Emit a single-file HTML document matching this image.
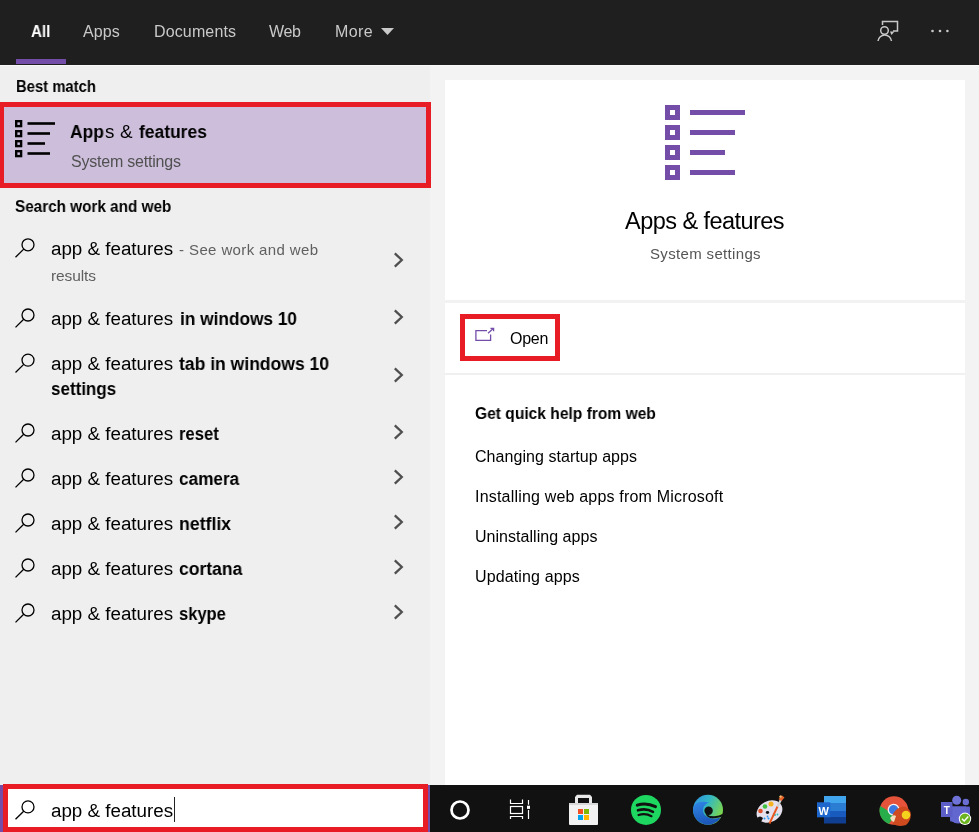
<!DOCTYPE html>
<html><head><meta charset="utf-8"><style>
html,body{margin:0;padding:0;width:979px;height:832px;overflow:hidden;background:#f0f0f0}
.t{position:absolute;will-change:transform;white-space:pre;line-height:20px;font-family:"Liberation Sans",sans-serif}
.r{position:absolute}
</style></head><body>
<div class="r" style="left:0px;top:0px;width:979px;height:65px;background:#1f1f1f;"></div>
<div class="t" style="left:31.20px;top:22px;font-size:16px;font-weight:700;color:#fff;transform:scaleX(0.9487);transform-origin:0 0;">All</div>
<div class="t" style="left:83.30px;top:22px;font-size:16px;font-weight:400;color:#c9c9c9;letter-spacing:0.117px;">Apps</div>
<div class="t" style="left:153.70px;top:22px;font-size:16px;font-weight:400;color:#c9c9c9;letter-spacing:0.137px;">Documents</div>
<div class="t" style="left:269.20px;top:22px;font-size:16px;font-weight:400;color:#c9c9c9;letter-spacing:-0.300px;">Web</div>
<div class="t" style="left:335.10px;top:22px;font-size:16px;font-weight:400;color:#c9c9c9;letter-spacing:0.417px;">More</div>
<svg class="r" style="left:0;top:0" width="979" height="65"><polygon points="381,28 394,28 387.5,35" fill="#c9c9c9"/><g fill="none" stroke="#c9c9c9" stroke-width="1.5"><polyline points="882.5,25 882.5,21.5 897.5,21.5 897.5,31 893,31"/><circle cx="884.5" cy="30.5" r="3.8"/><path d="M878,41 A6.8,6.8 0 0 1 891.5,41"/></g><polygon points="890,31.5 894.5,31.5 891.5,35" fill="#c9c9c9"/><circle cx="932.5" cy="31" r="1.3" fill="#c9c9c9"/><circle cx="940" cy="31" r="1.3" fill="#c9c9c9"/><circle cx="947.4" cy="31" r="1.3" fill="#c9c9c9"/></svg>
<div class="r" style="left:16px;top:59px;width:50px;height:5px;background:#744da9;"></div>
<div class="r" style="left:0px;top:65px;width:430px;height:720px;background:#efefef;"></div>
<div class="r" style="left:430px;top:65px;width:549px;height:720px;background:#f3f3f3;"></div>
<div class="r" style="left:0px;top:65px;width:979px;height:1px;background:#f8f8f8;"></div>
<div class="r" style="left:445px;top:80px;width:520px;height:705px;background:#ffffff;"></div>
<div class="r" style="left:445px;top:300px;width:520px;height:3px;background:#f2f2f2;"></div>
<div class="r" style="left:445px;top:373px;width:520px;height:2px;background:#f0f0f0;"></div>
<div class="t" style="left:15.60px;top:77px;font-size:16px;font-weight:700;color:#000;transform:scaleX(0.9264);transform-origin:0 0;">Best match</div>
<div class="r" style="left:-1px;top:102px;width:422px;height:76px;border:5px solid #e81c24;background:#cdbfdc"></div>
<svg class="r" style="left:0;top:100px" width="80" height="80"><g fill="none" stroke="#000" stroke-width="2.4"><rect x="16.2" y="21.2" width="4.9" height="4.9"/><rect x="16.2" y="31.2" width="4.9" height="4.9"/><rect x="16.2" y="41.2" width="4.9" height="4.9"/><rect x="16.2" y="51.2" width="4.9" height="4.9"/></g><g fill="#000"><rect x="27.5" y="22.2" width="27.5" height="2.6"/><rect x="27.5" y="32.2" width="22.5" height="2.6"/><rect x="27.5" y="42.2" width="17.5" height="2.6"/><rect x="27.5" y="52.2" width="22.5" height="2.6"/></g></svg>
<div class="t" style="left:70.10px;top:122px;font-size:18.8px;font-weight:700;color:#000;transform:scaleX(0.9302);transform-origin:0 0;">App</div>
<div class="t" style="left:105.30px;top:122px;font-size:18.8px;font-weight:400;color:#000;letter-spacing:0.000px;">s</div>
<div class="t" style="left:120.30px;top:122px;font-size:18.8px;font-weight:400;color:#000;letter-spacing:0.000px;">&amp;</div>
<div class="t" style="left:138.80px;top:122px;font-size:18.8px;font-weight:700;color:#000;transform:scaleX(0.9282);transform-origin:0 0;">features</div>
<div class="t" style="left:70.60px;top:152px;font-size:16px;font-weight:400;color:#505050;letter-spacing:-0.211px;">System settings</div>
<div class="t" style="left:15.30px;top:197px;font-size:16px;font-weight:700;color:#000;transform:scaleX(0.9554);transform-origin:0 0;">Search work and web</div>
<div class="t" style="left:50.70px;top:238.8px;font-size:18.8px;font-weight:400;color:#000;letter-spacing:-0.008px;">app &amp; features</div>
<div class="t" style="left:179.30px;top:240px;font-size:15px;font-weight:400;color:#606060;letter-spacing:0.000px;">-</div>
<div class="t" style="left:189.40px;top:240px;font-size:15px;font-weight:400;color:#606060;letter-spacing:0.380px;">See work and web</div>
<div class="t" style="left:50.90px;top:266px;font-size:15.5px;font-weight:400;color:#606060;letter-spacing:-0.125px;">results</div>
<svg class="r" style="left:0;top:0" width="60" height="840"><g fill="none" stroke="#000" stroke-width="1.3"><circle cx="28" cy="244.80" r="6.0"/><line x1="15.5" y1="257.20" x2="23.70" y2="249.10"/></g></svg>
<svg class="r" style="left:380px;top:250.39999999999998px" width="30" height="20"><polyline points="394.8,3.3 401.8,10 394.8,16.7" transform="translate(-380,0)" fill="none" stroke="#4f4f4f" stroke-width="2.3"/></svg>
<div class="t" style="left:50.70px;top:309px;font-size:18.8px;font-weight:400;color:#000;letter-spacing:-0.008px;">app &amp; features</div>
<div class="t" style="left:179.90px;top:309px;font-size:18.8px;font-weight:700;color:#000;transform:scaleX(0.9188);transform-origin:0 0;">in windows 10</div>
<svg class="r" style="left:0;top:0" width="60" height="840"><g fill="none" stroke="#000" stroke-width="1.3"><circle cx="28" cy="315.00" r="6.0"/><line x1="15.5" y1="327.40" x2="23.70" y2="319.30"/></g></svg>
<svg class="r" style="left:380px;top:307.3px" width="30" height="20"><polyline points="394.8,3.3 401.8,10 394.8,16.7" transform="translate(-380,0)" fill="none" stroke="#4f4f4f" stroke-width="2.3"/></svg>
<div class="t" style="left:50.70px;top:424px;font-size:18.8px;font-weight:400;color:#000;letter-spacing:-0.008px;">app &amp; features</div>
<div class="t" style="left:179.40px;top:424px;font-size:18.8px;font-weight:700;color:#000;transform:scaleX(0.8854);transform-origin:0 0;">reset</div>
<svg class="r" style="left:0;top:0" width="60" height="840"><g fill="none" stroke="#000" stroke-width="1.3"><circle cx="28" cy="430.00" r="6.0"/><line x1="15.5" y1="442.40" x2="23.70" y2="434.30"/></g></svg>
<svg class="r" style="left:380px;top:422.3px" width="30" height="20"><polyline points="394.8,3.3 401.8,10 394.8,16.7" transform="translate(-380,0)" fill="none" stroke="#4f4f4f" stroke-width="2.3"/></svg>
<div class="t" style="left:50.70px;top:469px;font-size:18.8px;font-weight:400;color:#000;letter-spacing:-0.008px;">app &amp; features</div>
<div class="t" style="left:179.40px;top:469px;font-size:18.8px;font-weight:700;color:#000;transform:scaleX(0.9152);transform-origin:0 0;">camera</div>
<svg class="r" style="left:0;top:0" width="60" height="840"><g fill="none" stroke="#000" stroke-width="1.3"><circle cx="28" cy="475.00" r="6.0"/><line x1="15.5" y1="487.40" x2="23.70" y2="479.30"/></g></svg>
<svg class="r" style="left:380px;top:467.3px" width="30" height="20"><polyline points="394.8,3.3 401.8,10 394.8,16.7" transform="translate(-380,0)" fill="none" stroke="#4f4f4f" stroke-width="2.3"/></svg>
<div class="t" style="left:50.70px;top:514px;font-size:18.8px;font-weight:400;color:#000;letter-spacing:-0.008px;">app &amp; features</div>
<div class="t" style="left:179.40px;top:514px;font-size:18.8px;font-weight:700;color:#000;transform:scaleX(0.9413);transform-origin:0 0;">netflix</div>
<svg class="r" style="left:0;top:0" width="60" height="840"><g fill="none" stroke="#000" stroke-width="1.3"><circle cx="28" cy="520.00" r="6.0"/><line x1="15.5" y1="532.40" x2="23.70" y2="524.30"/></g></svg>
<svg class="r" style="left:380px;top:512.3px" width="30" height="20"><polyline points="394.8,3.3 401.8,10 394.8,16.7" transform="translate(-380,0)" fill="none" stroke="#4f4f4f" stroke-width="2.3"/></svg>
<div class="t" style="left:50.70px;top:559px;font-size:18.8px;font-weight:400;color:#000;letter-spacing:-0.008px;">app &amp; features</div>
<div class="t" style="left:179.40px;top:559px;font-size:18.8px;font-weight:700;color:#000;transform:scaleX(0.9317);transform-origin:0 0;">cortana</div>
<svg class="r" style="left:0;top:0" width="60" height="840"><g fill="none" stroke="#000" stroke-width="1.3"><circle cx="28" cy="565.00" r="6.0"/><line x1="15.5" y1="577.40" x2="23.70" y2="569.30"/></g></svg>
<svg class="r" style="left:380px;top:557.3px" width="30" height="20"><polyline points="394.8,3.3 401.8,10 394.8,16.7" transform="translate(-380,0)" fill="none" stroke="#4f4f4f" stroke-width="2.3"/></svg>
<div class="t" style="left:50.70px;top:604px;font-size:18.8px;font-weight:400;color:#000;letter-spacing:-0.008px;">app &amp; features</div>
<div class="t" style="left:179.40px;top:604px;font-size:18.8px;font-weight:700;color:#000;transform:scaleX(0.8799);transform-origin:0 0;">skype</div>
<svg class="r" style="left:0;top:0" width="60" height="840"><g fill="none" stroke="#000" stroke-width="1.3"><circle cx="28" cy="610.00" r="6.0"/><line x1="15.5" y1="622.40" x2="23.70" y2="614.30"/></g></svg>
<svg class="r" style="left:380px;top:602.3px" width="30" height="20"><polyline points="394.8,3.3 401.8,10 394.8,16.7" transform="translate(-380,0)" fill="none" stroke="#4f4f4f" stroke-width="2.3"/></svg>
<div class="t" style="left:50.70px;top:353.6px;font-size:18.8px;font-weight:400;color:#000;letter-spacing:-0.008px;">app &amp; features</div>
<div class="t" style="left:179.30px;top:353.6px;font-size:18.8px;font-weight:700;color:#000;transform:scaleX(0.9338);transform-origin:0 0;">tab in windows 10</div>
<div class="t" style="left:50.70px;top:378.5px;font-size:18.8px;font-weight:700;color:#000;transform:scaleX(0.9057);transform-origin:0 0;">settings</div>
<svg class="r" style="left:0;top:0" width="60" height="840"><g fill="none" stroke="#000" stroke-width="1.3"><circle cx="28" cy="360.10" r="6.0"/><line x1="15.5" y1="372.50" x2="23.70" y2="364.40"/></g></svg>
<svg class="r" style="left:380px;top:365.4px" width="30" height="20"><polyline points="394.8,3.3 401.8,10 394.8,16.7" transform="translate(-380,0)" fill="none" stroke="#4f4f4f" stroke-width="2.3"/></svg>
<div class="r" style="left:0px;top:785px;width:430px;height:47px;background:#744da9;"></div>
<div class="r" style="left:3px;top:784px;width:415px;height:38px;border:5px solid #e81c24;background:#fff"></div>
<svg class="r" style="left:0;top:0" width="60" height="840"><g fill="none" stroke="#000" stroke-width="1.3"><circle cx="28" cy="806.90" r="6.0"/><line x1="15.5" y1="819.30" x2="23.70" y2="811.20"/></g></svg>
<div class="t" style="left:50.60px;top:800.8px;font-size:18.8px;font-weight:400;color:#000;letter-spacing:-0.008px;">app &amp; features</div>
<div class="r" style="left:174px;top:797px;width:1px;height:25px;background:#222;"></div>
<svg class="r" style="left:0;top:0" width="979" height="400"><g fill="none" stroke="#744da9" stroke-width="5"><rect x="667.5" y="107.5" width="10" height="10"/><rect x="667.5" y="127.5" width="10" height="10"/><rect x="667.5" y="147.5" width="10" height="10"/><rect x="667.5" y="167.5" width="10" height="10"/></g><g fill="#744da9"><rect x="690" y="110" width="55" height="5"/><rect x="690" y="130" width="45" height="5"/><rect x="690" y="150" width="35" height="5"/><rect x="690" y="170" width="45" height="5"/></g><g fill="none" stroke="#744da9" stroke-width="1.3"><polyline points="487,330.7 475.9,330.7 475.9,340.3 490.6,340.3 490.6,334.5"/><line x1="488" y1="333.2" x2="493.2" y2="328.4"/><polyline points="490.5,328.3 493.6,328.3 493.6,331.2"/></g></svg>
<div class="t" style="left:625.10px;top:211px;font-size:23.5px;font-weight:400;color:#000;letter-spacing:-0.543px;">Apps &amp; features</div>
<div class="t" style="left:649.80px;top:244px;font-size:15px;font-weight:400;color:#555555;letter-spacing:0.339px;">System settings</div>
<div class="r" style="left:460px;top:314px;width:90px;height:37px;border:5px solid #e81c24"></div>
<div class="t" style="left:510.40px;top:329px;font-size:16px;font-weight:400;color:#000;letter-spacing:-0.283px;">Open</div>
<div class="t" style="left:475.20px;top:404px;font-size:16px;font-weight:700;color:#000;transform:scaleX(0.9731);transform-origin:0 0;">Get quick help from web</div>
<div class="t" style="left:475.20px;top:447px;font-size:16px;font-weight:400;color:#000;letter-spacing:0.050px;">Changing startup apps</div>
<div class="t" style="left:475.00px;top:487px;font-size:16px;font-weight:400;color:#000;letter-spacing:0.191px;">Installing web apps from Microsoft</div>
<div class="t" style="left:475.00px;top:527px;font-size:16px;font-weight:400;color:#000;letter-spacing:0.034px;">Uninstalling apps</div>
<div class="t" style="left:475.00px;top:567px;font-size:16px;font-weight:400;color:#000;letter-spacing:0.133px;">Updating apps</div>
<div class="r" style="left:430px;top:785px;width:549px;height:47px;background:#111111;"></div>
<svg class="r" style="left:0;top:785px" width="979" height="47"><circle cx="460" cy="25" r="8.5" fill="none" stroke="#fff" stroke-width="2.7"/><g fill="none" stroke="#fff" stroke-width="1.2"><polyline points="510.5,14.5 510.5,18.5 522.5,18.5 522.5,14.5"/><rect x="510.5" y="21.5" width="12" height="7"/><polyline points="510.5,34 510.5,31.5 522.5,31.5 522.5,34"/><line x1="528.5" y1="15" x2="528.5" y2="19.7"/><line x1="528.5" y1="25" x2="528.5" y2="34"/></g><rect x="527" y="20.7" width="3" height="3.2" fill="#fff"/><path d="M575,18 L575,12 L577,9.8 L590,9.8 L592,12 L592,18 L589,18 L589,13 L578,13 L578,18 Z" fill="#e8e8e8"/><rect x="569" y="18" width="29" height="22" rx="1" fill="#f2f2f2"/><rect x="569" y="18" width="29" height="2" fill="#d8d8d8"/><rect x="578" y="24" width="5" height="5" fill="#f25022"/><rect x="584" y="24" width="5" height="5" fill="#7fba00"/><rect x="578" y="30" width="5" height="5" fill="#00a4ef"/><rect x="584" y="30" width="5" height="5" fill="#ffb900"/><circle cx="646" cy="24.9" r="15" fill="#1ed760"/><g fill="none" stroke="#111" stroke-linecap="round"><path d="M637.3,20.2 Q646,17 655.5,21.6" stroke-width="3"/><path d="M638,25.3 Q646,22.8 653,26.8" stroke-width="2.6"/><path d="M638.5,30 Q645.5,27.8 651.5,31.2" stroke-width="2.2"/></g><defs><linearGradient id="eg1" x1="0" y1="0" x2="1" y2="0.5"><stop offset="0" stop-color="#2f8de6"/><stop offset="0.5" stop-color="#33b8c4"/><stop offset="1" stop-color="#7ad64e"/></linearGradient><linearGradient id="eg2" x1="0" y1="0" x2="0.3" y2="1"><stop offset="0" stop-color="#2f86e6"/><stop offset="1" stop-color="#1c57b8"/></linearGradient></defs><circle cx="708" cy="24.8" r="15" fill="url(#eg1)"/><path d="M693,24.8 A15,15 0 0 0 721,32.2 Q714,34.5 708.5,32.5 Q702.5,30 703,24 Q704,19 709,17.5 Q701,15.5 696,18.5 Q693.5,21 693,24.8 Z" fill="url(#eg2)"/><circle cx="708.6" cy="25.8" r="4.2" fill="#111"/><path d="M705.5,28.5 Q709,31.5 714.5,31.3 Q719,31 723,28.8 L722.6,31.6 Q717,33.6 712,33.3 Q706.5,32.5 705.5,28.5 Z" fill="#111"/><g transform="rotate(-28 769.5 26.5)"><ellipse cx="769.5" cy="26.5" rx="13.5" ry="10.5" fill="#e4e0ec"/></g><path d="M757,33 Q760,30 763,33 Q762,36 760,37 Z" fill="#111"/><circle cx="760.5" cy="26" r="2.3" fill="#e0522a"/><circle cx="765" cy="21.5" r="2.3" fill="#3fc23f"/><circle cx="771" cy="19" r="2.5" fill="#f5b21f"/><ellipse cx="767.5" cy="27.5" rx="1.7" ry="1.4" fill="#111"/><circle cx="764.5" cy="33.5" r="1" fill="#2b9cf2"/><circle cx="768.5" cy="33.5" r="1" fill="#2b9cf2"/><circle cx="767.5" cy="31.5" r="0.9" fill="#2b9cf2"/><circle cx="775" cy="30" r="1" fill="#2bc0c0"/><circle cx="777.5" cy="29.5" r="0.9" fill="#2bc0c0"/><line x1="769.5" y1="38.5" x2="777.5" y2="21.5" stroke="#e8581e" stroke-width="1.9"/><line x1="777.5" y1="21.5" x2="781" y2="14.5" stroke="#cfcfcf" stroke-width="2.2"/><polygon points="778.5,14 782,10.5 784.5,12.5 781.5,16" fill="#e8642a"/><polygon points="779,11.5 781,10 782,12 780,13" fill="#f4c070"/><rect x="824" y="11" width="22" height="7" fill="#41a5ee"/><rect x="824" y="18" width="22" height="8" fill="#2b7cd3"/><rect x="824" y="26" width="22" height="6" fill="#185abd"/><rect x="824" y="32" width="22" height="6.5" fill="#103f91"/><rect x="817" y="17.3" width="13.3" height="15" fill="#1d66cc"/><text x="823.6" y="29.5" font-family="Liberation Sans" font-weight="700" font-size="11" fill="#fff" text-anchor="middle">W</text><circle cx="894" cy="25.5" r="14.3" fill="#e5533a"/><path d="M880.2,21 A14.3,14.3 0 0 0 889,39 L895,30 Z" fill="#27ae4a"/><circle cx="893.6" cy="24.8" r="6" fill="#f4f4f4"/><circle cx="893.6" cy="24.8" r="4.7" fill="#3b78e0"/><path d="M892,32 Q894,24 901,22 Q908,21 910.5,27 Q912,35 906,40 Q898,42.5 893,39 Z" fill="#cf4a1f"/><ellipse cx="906" cy="30" rx="4.3" ry="4.2" fill="#f3d11d"/><path d="M890,33 Q893,29 896,31 L894,37 Q891,36 890,33 Z" fill="#f0e0c0"/><rect x="950" y="21.5" width="20" height="15" rx="1" fill="#5e62c8"/><path d="M950,21.5 L966,21.5 L966,32 Q966,38 958,38.5 Q951,38 950,32 Z" fill="#6266cf"/><circle cx="956.7" cy="15.3" r="4.5" fill="#6f73d8"/><circle cx="965.8" cy="17" r="3.2" fill="#6a6ed2"/><rect x="941" y="17" width="11.5" height="15" fill="#5b5fc7"/><text x="946.8" y="28.5" font-family="Liberation Sans" font-weight="700" font-size="10" fill="#fff" text-anchor="middle">T</text><circle cx="965" cy="33.8" r="6.2" fill="#fff"/><circle cx="965" cy="33.8" r="5.2" fill="#6bb41f"/><polyline points="962,33.8 964.2,36 968.3,31.6" fill="none" stroke="#fff" stroke-width="1.4"/></svg>
</body></html>
